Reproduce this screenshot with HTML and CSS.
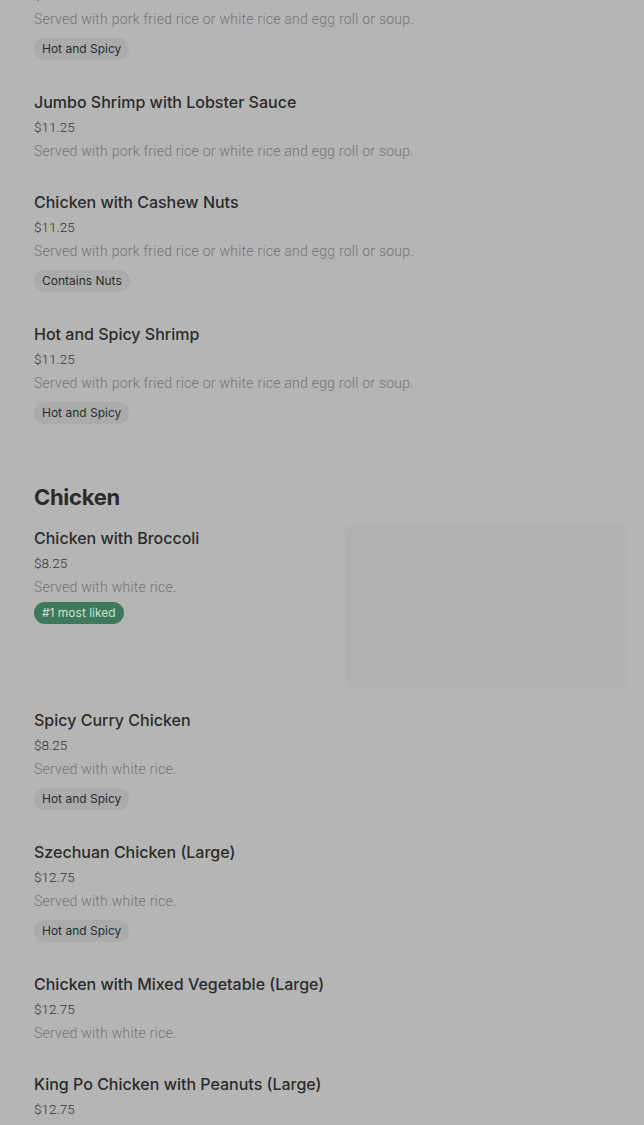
FILE: index.html
```html
<!DOCTYPE html>
<html>
<head>
<meta charset="utf-8">
<link rel="stylesheet" href="styles.css">
</head>
<body>
<main class="menu">
  <section class="section section--first">
    <div class="item">
      <div class="item-text">
        <h3 class="item-title">Kung Po Shrimp</h3>
        <div class="item-price">$11.25</div>
        <p class="item-desc">Served with pork fried rice or white rice and egg roll or soup.</p>
        <span class="badge">Hot and Spicy</span>
      </div>
    </div>
    <div class="item">
      <div class="item-text">
        <h3 class="item-title">Jumbo Shrimp with Lobster Sauce</h3>
        <div class="item-price">$11.25</div>
        <p class="item-desc">Served with pork fried rice or white rice and egg roll or soup.</p>
      </div>
    </div>
    <div class="item">
      <div class="item-text">
        <h3 class="item-title">Chicken with Cashew Nuts</h3>
        <div class="item-price">$11.25</div>
        <p class="item-desc">Served with pork fried rice or white rice and egg roll or soup.</p>
        <span class="badge">Contains Nuts</span>
      </div>
    </div>
    <div class="item">
      <div class="item-text">
        <h3 class="item-title">Hot and Spicy Shrimp</h3>
        <div class="item-price">$11.25</div>
        <p class="item-desc">Served with pork fried rice or white rice and egg roll or soup.</p>
        <span class="badge">Hot and Spicy</span>
      </div>
    </div>
  </section>

  <section class="section">
    <h2 class="section-title">Chicken</h2>
    <div class="item item--image">
      <div class="item-text">
        <h3 class="item-title">Chicken with Broccoli</h3>
        <div class="item-price">$8.25</div>
        <p class="item-desc">Served with white rice.</p>
        <span class="badge badge--green">#1 most liked</span>
      </div>
      <div class="item-image"></div>
    </div>
    <div class="item">
      <div class="item-text">
        <h3 class="item-title">Spicy Curry Chicken</h3>
        <div class="item-price">$8.25</div>
        <p class="item-desc">Served with white rice.</p>
        <span class="badge">Hot and Spicy</span>
      </div>
    </div>
    <div class="item">
      <div class="item-text">
        <h3 class="item-title">Szechuan Chicken (Large)</h3>
        <div class="item-price">$12.75</div>
        <p class="item-desc">Served with white rice.</p>
        <span class="badge">Hot and Spicy</span>
      </div>
    </div>
    <div class="item">
      <div class="item-text">
        <h3 class="item-title">Chicken with Mixed Vegetable (Large)</h3>
        <div class="item-price">$12.75</div>
        <p class="item-desc">Served with white rice.</p>
      </div>
    </div>
    <div class="item">
      <div class="item-text">
        <h3 class="item-title">King Po Chicken with Peanuts (Large)</h3>
        <div class="item-price">$12.75</div>
        <p class="item-desc">Served with white rice.</p>
      </div>
    </div>
  </section>
</main>
</body>
</html>
```

FILE: styles.css
```css
html, body {
  margin: 0;
  padding: 0;
  background: #b5b5b5;
  overflow: hidden;
}

body {
  font-family: "Inter", "Roboto", sans-serif;
  color: #2b2b2b;
}

.menu {
  padding: 0 20px 0 34px;
  margin-top: -55px;
}

.section {
  display: flex;
  flex-direction: column;
  margin-top: 40px;
}

.section--first {
  margin-top: 0;
}

.section-title {
  margin: 0;
  font-size: 22px;
  line-height: 32px;
  font-weight: 700;
  letter-spacing: -0.3px;
  color: #2b2b2b;
}

.item {
  display: flex;
  justify-content: space-between;
  align-items: flex-start;
  padding: 13px 0 14px;
}

.item--image {
  padding-bottom: 8px;
}

.item-text {
  display: flex;
  flex-direction: column;
  align-items: flex-start;
}

.item-title {
  margin: 0;
  font-size: 16px;
  line-height: 24px;
  font-weight: 500;
  color: #2b2b2b;
}

.item-price {
  margin-top: 1px;
  font-family: "Roboto", sans-serif;
  font-weight: 300;
  font-size: 13.5px;
  line-height: 24px;
  color: #333333;
}

.item-desc {
  margin: 0;
  font-family: "Roboto", sans-serif;
  font-weight: 300;
  font-size: 14px;
  line-height: 24px;
  letter-spacing: 0.24px;
  color: #747474;
}

.badge {
  display: inline-block;
  margin: 7px 0 3px;
  padding: 0 8px;
  height: 22px;
  line-height: 22px;
  border-radius: 11px;
  background: #ababab;
  font-family: "Inter", sans-serif;
  font-size: 12px;
  color: #2b2b2b;
}

.badge--green {
  margin-top: 3px;
  background: #3c7a5b;
  color: #cfe0d4;
}

.item-image {
  width: 276px;
  height: 160px;
  margin-top: 1px;
  background: #b0b0b0;
  box-shadow: 0 0 3px 1px rgba(170, 170, 170, 0.35);
  flex-shrink: 0;
}
```
